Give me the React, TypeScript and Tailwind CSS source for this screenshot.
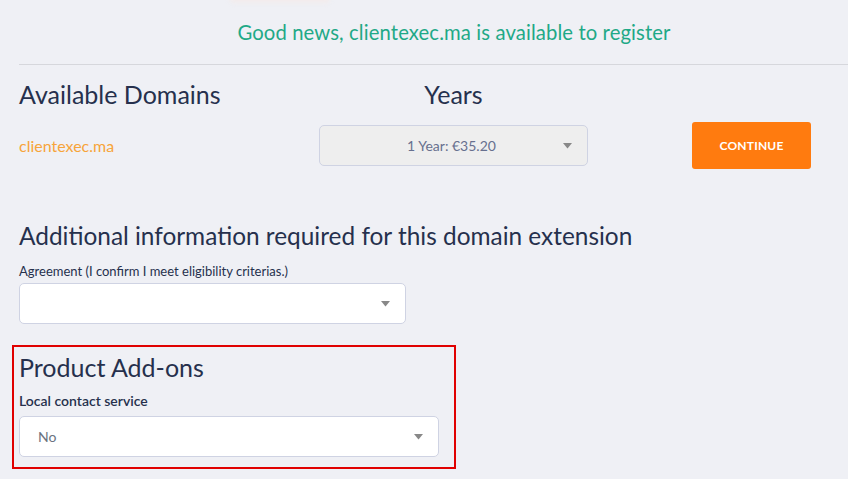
import React from "react";

const Caret = () => (
  <svg width="9" height="6" viewBox="0 0 9 6" className="shrink-0">
    <path d="M0 0 H9 L4.5 5.5 Z" fill="#888" />
  </svg>
);

export default function App() {
  return (
    <div
      className="w-[848px] h-[479px] overflow-hidden bg-[#eff0f5] relative"
      style={{ fontFamily: "Lato, 'Noto Sans', sans-serif" }}
    >
      <div className="absolute left-[230px] top-[-6px] w-[100px] h-[9px] rounded-md bg-[#f3ecec] blur-[2px]" />
      <div className="pl-[19px]">
        <div className="h-[64px] flex items-center justify-center pl-[41px] pt-[1px]">
          <span className="text-[20.3px] text-[#1fa987] tracking-[0.1px]">
            Good news, clientexec.ma is available to register
          </span>
        </div>
        <div className="h-[1px] bg-[#d6d7dc]" />
        <div className="grid grid-cols-[300px_269px_104px_119px] mt-[15px]">
          <div className="text-[25px] leading-[28px] text-[#26304d]">Available Domains</div>
          <div className="text-[25px] leading-[28px] text-[#26304d] text-center">Years</div>
          <div />
          <div />
          <div className="flex items-center text-[16px] text-[#f7a43a] h-[47px] mt-[14px]">clientexec.ma</div>
          <div className="mt-[17px] h-[41px] rounded-[5px] border border-[#cfd3e3] bg-[#eeeeee] flex items-center pl-[20px] pr-[15px]">
            <span className="flex-1 text-center text-[14px] text-[#67708f]">1 Year: €35.20</span>
            <Caret />
          </div>
          <div />
          <button className="mt-[14px] h-[47px] w-[119px] rounded-[3px] bg-[#ff7b0f] text-white text-[12px] font-bold tracking-[0.2px]">
            CONTINUE
          </button>
        </div>
        <div className="mt-[53px] text-[24.4px] leading-[28px] text-[#26304d]">
          Additional information required for this domain extension
        </div>
        <div className="mt-[12px] text-[13px] leading-[18px] text-[#26304d]">
          Agreement (I confirm I meet eligibility criterias.)
        </div>
        <div className="mt-[3px] w-[387px] h-[41px] rounded-[5px] border border-[#cfd3e3] bg-white flex items-center justify-end pr-[15px]">
          <Caret />
        </div>
      </div>
      <div className="ml-[12px] mt-[21px] w-[444px] h-[124px] border-2 border-[#e00000] pl-[5px] pt-[6px]">
        <div className="text-[25px] leading-[28px] text-[#26304d]">Product Add-ons</div>
        <div className="mt-[11px] text-[14px] leading-[18px] font-semibold text-[#26304d]">
          Local contact service
        </div>
        <div className="mt-[6px] w-[420px] h-[41px] rounded-[5px] border border-[#cfd3e3] bg-white flex items-center pl-[18px] pr-[15px]">
          <span className="flex-1 text-[14px] text-[#6b7280]">No</span>
          <Caret />
        </div>
      </div>
    </div>
  );
}
